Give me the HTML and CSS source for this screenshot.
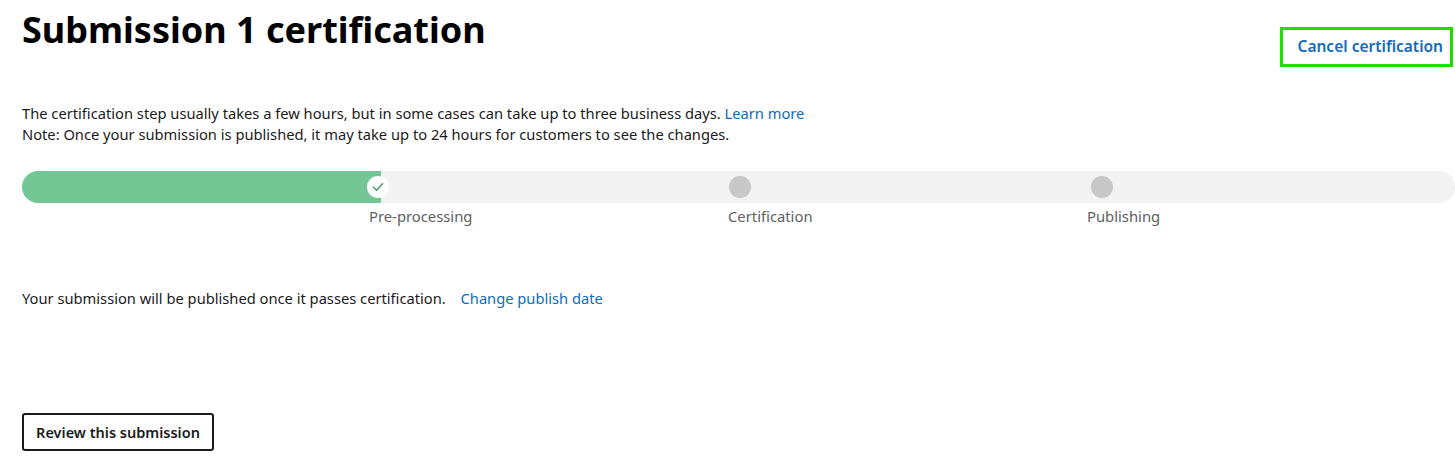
FILE: index.html
```html
<!DOCTYPE html>
<html lang="en">
<head>
<meta charset="utf-8">
<title>Submission 1 certification</title>
<link rel="stylesheet" href="styles.css">
</head>
<body>
<div class="page">
  <header class="head">
    <h1 class="title">Submission 1 certification</h1>
    <div class="cancel-box"><a class="link cancel" href="#">Cancel certification</a></div>
  </header>

  <p class="intro">The certification step usually takes a few hours, but in some cases can take up to three business days. <a class="link" href="#">Learn more</a><br>Note: Once your submission is published, it may take up to 24 hours for customers to see the changes.</p>

  <div class="progress">
    <div class="bar">
      <span class="dot done">
        <svg width="12" height="10" viewBox="0 0 12 10"><path d="M1.5 5.2 L4.6 8.2 L10.5 1.8" fill="none" stroke="#4f9a6e" stroke-width="1.6" stroke-linecap="round" stroke-linejoin="round"/></svg>
      </span>
      <span class="dot"></span>
      <span class="dot"></span>
    </div>
    <div class="labels">
      <span class="label">Pre-processing</span>
      <span class="label">Certification</span>
      <span class="label">Publishing</span>
    </div>
  </div>

  <p class="publish">Your submission will be published once it passes certification. <a class="link publish-link" href="#">Change publish date</a></p>

  <button class="review" type="button">Review this submission</button>
</div>
</body>
</html>
```

FILE: styles.css
```css
html, body {
  margin: 0;
  padding: 0;
  background: #ffffff;
}

body {
  font-family: "Noto Sans", "Open Sans", sans-serif;
  color: #1b1b1b;
  font-size: 14.7px;
  overflow: hidden;
}

.page {
  padding: 0 0 0 22px;
}

.head {
  display: flex;
  justify-content: space-between;
  align-items: flex-start;
}

.title {
  margin: 6px 0 0 0;
  font-size: 36px;
  line-height: 48px;
  font-weight: 700;
  color: #000;
}

.cancel-box {
  margin-top: 27px;
  margin-right: 2px;
  border: 3px solid #22dd00;
  height: 31px;
  width: 160px;
  display: flex;
  align-items: center;
  justify-content: flex-end;
  padding-right: 7px;
  padding-bottom: 3px;
  box-sizing: content-box;
}

.link {
  color: #0f6cbd;
  text-decoration: none;
}

.cancel {
  font-size: 15.5px;
  font-weight: 600;
}

.intro {
  margin: 36px 0 0 0;
  font-size: 14.7px;
  line-height: 21px;
}

.progress {
  margin-top: 26px;
}

.bar {
  height: 32px;
  border-radius: 16px;
  background: linear-gradient(to right, #74c794 0, #74c794 359px, #f2f2f2 359px);
  display: flex;
  align-items: center;
  padding-left: 345px;
  gap: 340px;
}

.dot {
  width: 22px;
  height: 22px;
  border-radius: 50%;
  background: #c8c8c8;
  display: flex;
  align-items: center;
  justify-content: center;
  flex: none;
}

.dot.done {
  background: #ffffff;
}

.labels {
  display: flex;
  padding-left: 347px;
  margin-top: 2px;
}

.label {
  width: 359px;
  flex: none;
  font-size: 14.8px;
  line-height: 22px;
  color: #5f5f5f;
}

.publish {
  margin: 60px 0 0 0;
  font-size: 14.7px;
  line-height: 22px;
}

.publish-link {
  margin-left: 11px;
}

.review {
  margin-top: 104px;
  font-family: inherit;
  font-size: 14.5px;
  font-weight: 600;
  color: #1b1b1b;
  background: #fff;
  border: 2px solid #1b1b1b;
  border-radius: 3px;
  width: 192px;
  height: 38px;
  padding: 0;
}
```
